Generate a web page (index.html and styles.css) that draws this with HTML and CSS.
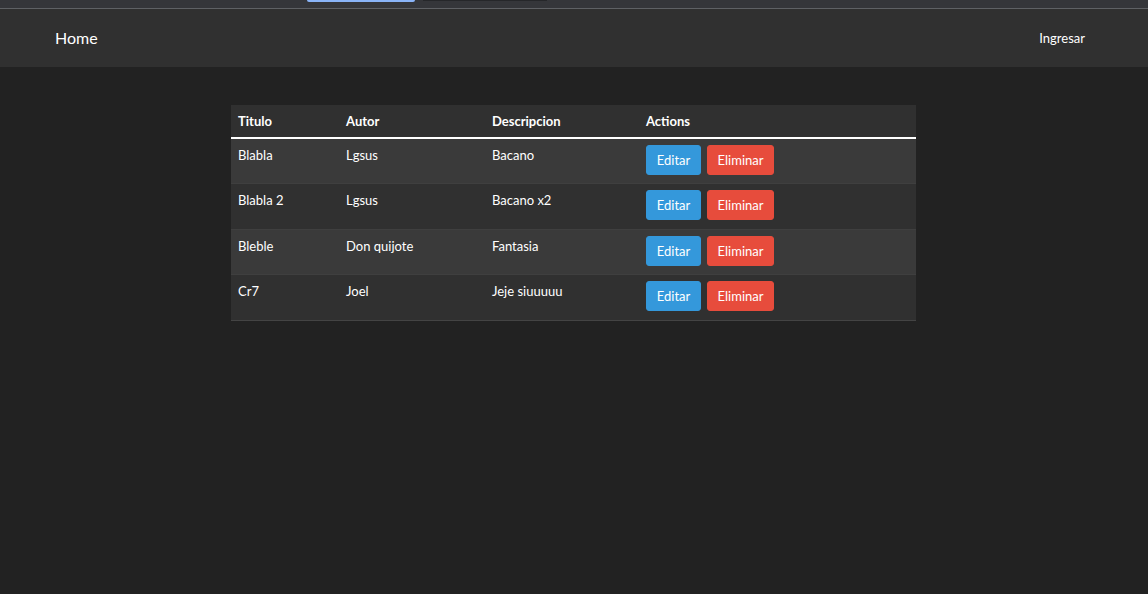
FILE: index.html
```html
<!DOCTYPE html>
<html lang="es">
<head>
<meta charset="utf-8">
<title>Home</title>
<link rel="stylesheet" href="styles.css">
</head>
<body>
<div class="chrome">
  <span class="tab tab-active"></span>
  <span class="tab tab-other"></span>
</div>
<nav class="navbar">
  <a class="brand" href="#">Home</a>
  <a class="nav-link" href="#">Ingresar</a>
</nav>
<main class="content">
  <table class="books">
    <thead>
      <tr>
        <th class="c1">Titulo</th>
        <th class="c2">Autor</th>
        <th class="c3">Descripcion</th>
        <th class="c4">Actions</th>
      </tr>
    </thead>
    <tbody>
      <tr>
        <td>Blabla</td><td>Lgsus</td><td>Bacano</td>
        <td class="actions"><button class="btn btn-edit">Editar</button><button class="btn btn-del">Eliminar</button></td>
      </tr>
      <tr>
        <td>Blabla 2</td><td>Lgsus</td><td>Bacano x2</td>
        <td class="actions"><button class="btn btn-edit">Editar</button><button class="btn btn-del">Eliminar</button></td>
      </tr>
      <tr>
        <td>Bleble</td><td>Don quijote</td><td>Fantasia</td>
        <td class="actions"><button class="btn btn-edit">Editar</button><button class="btn btn-del">Eliminar</button></td>
      </tr>
      <tr>
        <td>Cr7</td><td>Joel</td><td>Jeje siuuuuu</td>
        <td class="actions"><button class="btn btn-edit">Editar</button><button class="btn btn-del">Eliminar</button></td>
      </tr>
    </tbody>
  </table>
</main>
</body>
</html>
```
FILE: styles.css
```css
* { box-sizing: border-box; }
html, body { margin: 0; padding: 0; }
body {
  background: #222222;
  color: #ffffff;
  font-family: Lato, "Noto Sans", sans-serif;
  font-size: 15px;
  line-height: 1.5;
  height: 594px;
  overflow: hidden;
}
.chrome {
  height: 9px;
  background: #35363a;
  border-bottom: 1px solid #5f6165;
  position: relative;
}
.tab {
  position: absolute;
  top: 0;
  height: 2px;
}
.tab-active { left: 307px; width: 108px; background: #8ab4f8; border-radius: 0 0 2px 2px; }
.tab-other { left: 423px; width: 124px; height: 1px; background: #26272a; }
.navbar {
  height: 58px;
  background: #303030;
  display: flex;
  align-items: center;
  justify-content: space-between;
  padding: 0 63px 0 55px;
}
.brand {
  color: #ffffff;
  text-decoration: none;
  font-size: 16px;
}
.nav-link {
  color: #ffffff;
  text-decoration: none;
  font-size: 13px;
  margin-top: 1px;
}
.content {
  padding: 38px 1px 0 0;
  display: flex;
  justify-content: center;
}
.books {
  width: 685px;
  border-collapse: collapse;
  background: #303030;
}
.books th {
  text-align: left;
  font-weight: 700;
  font-size: 13px;
  padding: 6px 7px 5px;
  border-bottom: 2px solid #ffffff;
  line-height: 21px;
}
.c1 { width: 108px; }
.c2 { width: 146px; }
.c3 { width: 154px; }
.books td {
  font-size: 13px;
  padding: 7px 7px 7px;
  vertical-align: top;
  line-height: 19px;
  border-top: 1px solid #3f3f3f;
  height: 45.5px;
}
.books td.actions { padding-top: 6px; }
.books tbody tr:first-child td { border-top: none; }
.books tbody tr:last-child td { border-bottom: 1px solid #444444; }
.books tbody tr:nth-child(odd) { background: #3a3a3a; }
.btn {
  font-family: Lato, "Noto Sans", sans-serif;
  font-size: 13px;
  line-height: 20px;
  color: #ffffff;
  border: 1px solid transparent;
  border-radius: 3px;
  padding: 4px 8px;
  height: 30px;
  margin-right: 6px;
  cursor: pointer;
}
.btn-edit { background: #3498db; border-color: #3498db; width: 55px; }
.btn-del { background: #e74c3c; border-color: #e74c3c; width: 67px; }
```
